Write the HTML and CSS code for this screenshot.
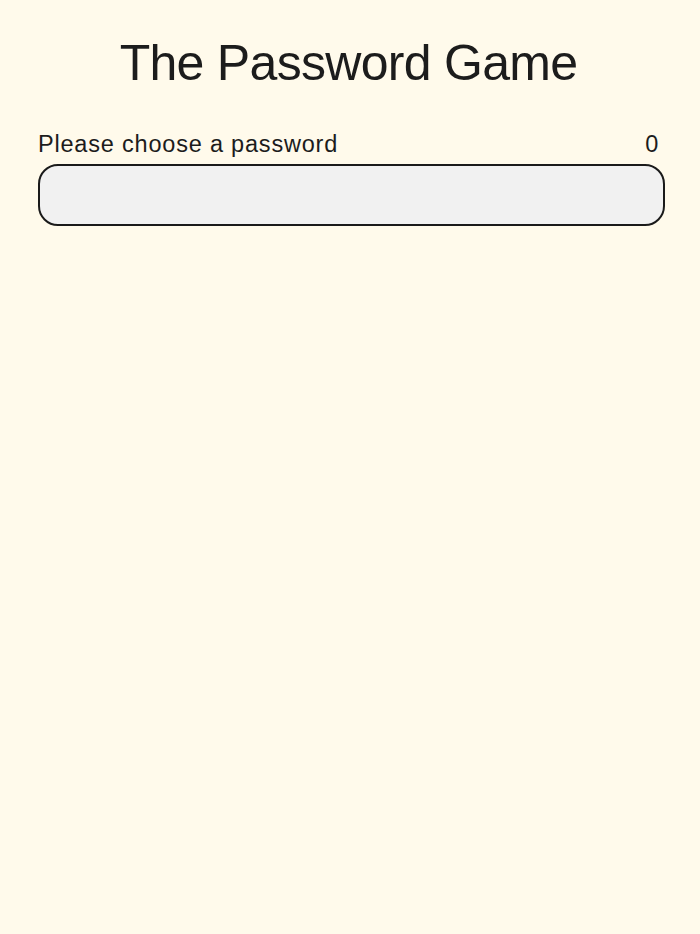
FILE: index.html
```html
<!DOCTYPE html>
<html lang="en">
<head>
<meta charset="utf-8">
<title>The Password Game</title>
<link rel="stylesheet" href="styles.css">
</head>
<body>
<main class="page">
  <h1 class="title">The Password Game</h1>
  <div class="password-box">
    <div class="password-label">
      <span class="label-text">Please choose a password</span>
      <span class="length">0</span>
    </div>
    <div class="password-field" contenteditable="true"></div>
  </div>
</main>
</body>
</html>
```

FILE: styles.css
```css
html, body {
  margin: 0;
  padding: 0;
  background: #fffaeb;
}
body {
  font-family: "Liberation Sans", Arial, sans-serif;
  color: #1c1c1c;
}
.page {
  width: 627px;
  margin: 0 auto;
  padding-left: 3px;
  display: flex;
  flex-direction: column;
}
.title {
  margin: 34px 0 0;
  padding-right: 6px;
  font-size: 50px;
  font-weight: 400;
  text-align: center;
  line-height: 58px;
  letter-spacing: -0.7px;
}
.password-box {
  margin-top: 39px;
  display: flex;
  flex-direction: column;
}
.password-label {
  display: flex;
  justify-content: space-between;
  align-items: baseline;
  font-size: 23.5px;
  line-height: 26px;
  letter-spacing: 0.8px;
  padding: 0 6px 0 0;
}
.password-field {
  margin-top: 7px;
  height: 58px;
  border: 2px solid #1a1a1a;
  border-radius: 20px;
  background: #f1f1f1;
  box-sizing: content-box;
  outline: none;
}
```
